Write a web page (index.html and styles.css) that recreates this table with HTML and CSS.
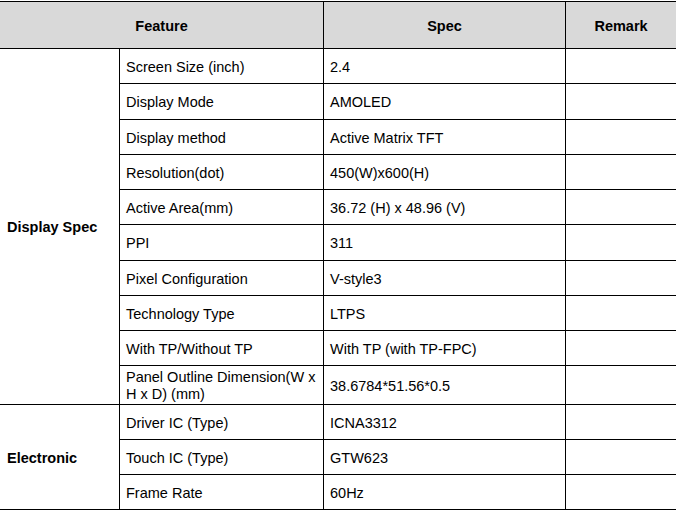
FILE: index.html
```html
<!DOCTYPE html>
<html>
<head>
<meta charset="utf-8">
<link rel="stylesheet" href="styles.css">
</head>
<body>
<table class="spec">
  <colgroup>
    <col class="c1"><col class="c2"><col class="c3"><col class="c4">
  </colgroup>
  <thead>
    <tr class="head">
      <th colspan="2">Feature</th>
      <th>Spec</th>
      <th>Remark</th>
    </tr>
  </thead>
  <tbody>
    <tr><td class="group" rowspan="10">Display Spec</td><td>Screen Size (inch)</td><td>2.4</td><td></td></tr>
    <tr class="t36"><td>Display Mode</td><td>AMOLED</td><td></td></tr>
    <tr><td>Display method</td><td>Active Matrix TFT</td><td></td></tr>
    <tr><td>Resolution(dot)</td><td>450(W)x600(H)</td><td></td></tr>
    <tr><td>Active Area(mm)</td><td>36.72 (H) x 48.96 (V)</td><td></td></tr>
    <tr class="t36"><td>PPI</td><td>311</td><td></td></tr>
    <tr><td>Pixel Configuration</td><td>V-style3</td><td></td></tr>
    <tr><td>Technology Type</td><td>LTPS</td><td></td></tr>
    <tr><td>With TP/Without TP</td><td>With TP (with TP-FPC)</td><td></td></tr>
    <tr class="two"><td class="wrap">Panel Outline Dimension(W x<br>H x D) (mm)</td><td>38.6784*51.56*0.5</td><td></td></tr>
    <tr><td class="group" rowspan="3">Electronic</td><td>Driver IC (Type)</td><td>ICNA3312</td><td></td></tr>
    <tr><td>Touch IC (Type)</td><td>GTW623</td><td></td></tr>
    <tr><td>Frame Rate</td><td>60Hz</td><td></td></tr>
  </tbody>
</table>
</body>
</html>
```
FILE: styles.css
```css
html, body {
  margin: 0;
  padding: 0;
  background: #fff;
}
body {
  font-family: "Liberation Sans", Arial, sans-serif;
  font-size: 14.5px;
  color: #000;
  overflow: hidden;
}
.spec {
  border-collapse: collapse;
  table-layout: fixed;
  width: 677px;
  margin-top: 1px;
  margin-left: -1px;
}
.c1 { width: 120px; }
.c2 { width: 204px; }
.c3 { width: 242px; }
.c4 { width: 111px; }
.spec th, .spec td {
  border: 1px solid #000;
  padding: 2px 6px 0;
  text-align: left;
  vertical-align: middle;
  line-height: 17px;
  white-space: nowrap;
}
.spec th {
  background: #d9d9d9;
  font-weight: bold;
  text-align: center;
  height: 44px;
}
.spec td { height: 32px; }
.spec tr.t36 td { height: 33px; }
.spec tr.two td { height: 36px; }
.spec td.group {
  font-weight: bold;
  padding-left: 7px;
}
```
